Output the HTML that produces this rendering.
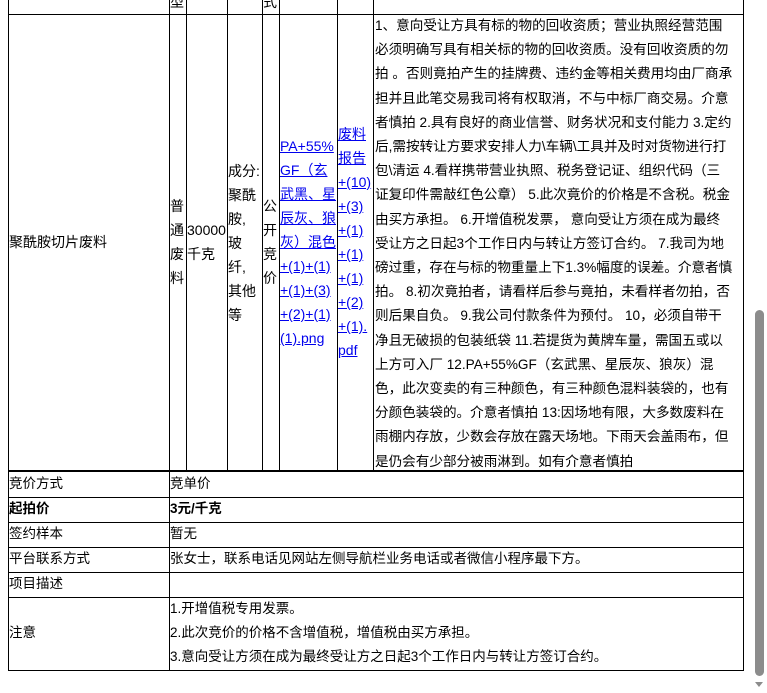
<!DOCTYPE html>
<html><head><meta charset="utf-8"><style>
body{margin:0;width:767px;height:693px;overflow:hidden;background:#fff;font-family:"Liberation Sans","Noto Sans CJK SC",sans-serif;font-size:13.5px;color:#000;position:relative}
.a{position:absolute}
.v{position:absolute;width:1px;background:#000}
.h{position:absolute;height:1px;background:#000}
.c{position:absolute;line-height:24px;white-space:nowrap}
.n{font-size:14px}
a{color:#00e;text-decoration:underline}
.t{position:absolute;left:375px;top:14px;line-height:24.2px;font-size:13.6px;white-space:nowrap}
</style></head><body>
<div class="h" style="left:8px;top:14px;width:736px"></div>
<div class="c n" style="left:170px;top:-10px">型</div>
<div class="c n" style="left:263px;top:-10px">式</div>
<div class="v" style="left:8px;top:0;height:671px"></div>
<div class="v" style="left:169px;top:0;height:471px"></div>
<div class="v" style="left:186px;top:0;height:471px"></div>
<div class="v" style="left:227px;top:0;height:471px"></div>
<div class="v" style="left:262px;top:0;height:471px"></div>
<div class="v" style="left:279px;top:0;height:471px"></div>
<div class="v" style="left:337px;top:0;height:471px"></div>
<div class="v" style="left:373px;top:0;height:471px"></div>
<div class="v" style="left:743px;top:0;height:671px"></div>
<div class="c n" style="left:9px;top:230px">聚酰胺切片废料</div>
<div class="c n" style="left:170px;top:194px">普<br>通<br>废<br>料</div>
<div class="c n" style="left:187px;top:218px">30000<br>千克</div>
<div class="c n" style="left:228px;top:159px">成分:<br>聚酰<br>胺,<br>玻<br>纤,<br>其他<br>等</div>
<div class="c n" style="left:263px;top:194px">公<br>开<br>竞<br>价</div>
<div class="c n" style="left:280px;top:134px"><a>PA+55%<br>GF（玄<br>武黑、星<br>辰灰、狼<br>灰）混色<br>+(1)+(1)<br>+(1)+(3)<br>+(2)+(1)<br>(1).png</a></div>
<div class="c n" style="left:338px;top:122px"><a>废料<br>报告<br>+(10)<br>+(3)<br>+(1)<br>+(1)<br>+(1)<br>+(2)<br>+(1).<br>pdf</a></div>
<div class="t">1、意向受让方具有标的物的回收资质；营业执照经营范围<br>必须明确写具有相关标的物的回收资质。没有回收资质的勿<br>拍 。否则竟拍产生的挂牌费、违约金等相关费用均由厂商承<br>担并且此笔交易我司将有权取消，不与中标厂商交易。介意<br>者慎拍 2.具有良好的商业信誉、财务状况和支付能力 3.定约<br>后,需按转让方要求安排人力\车辆\工具并及时对货物进行打<br>包\清运 4.看样携带营业执照、税务登记证、组织代码（三<br>证复印件需敲红色公章） 5.此次竟价的价格是不含税。税金<br>由买方承担。 6.开增值税发票， 意向受让方须在成为最终<br>受让方之日起3个工作日内与转让方签订合约。 7.我司为地<br>磅过重，存在与标的物重量上下1.3%幅度的误差。介意者慎<br>拍。 8.初次竟拍者，请看样后参与竟拍，未看样者勿拍，否<br>则后果自负。 9.我公司付款条件为预付。 10，必须自带干<br>净且无破损的包装纸袋 11.若提货为黄牌车量，需国五或以<br>上方可入厂 12.PA+55%GF（玄武黑、星辰灰、狼灰）混<br>色，此次变卖的有三种颜色，有三种颜色混料装袋的，也有<br>分颜色装袋的。介意者慎拍 13:因场地有限，大多数废料在<br>雨棚内存放，少数会存放在露天场地。下雨天会盖雨布，但<br>是仍会有少部分被雨淋到。如有介意者慎拍</div>
<div class="h" style="left:8px;top:470px;width:736px;height:2px"></div>
<div class="h" style="left:8px;top:497px;width:736px"></div>
<div class="h" style="left:8px;top:522px;width:736px"></div>
<div class="h" style="left:8px;top:547px;width:736px"></div>
<div class="h" style="left:8px;top:572px;width:736px"></div>
<div class="h" style="left:8px;top:597px;width:736px"></div>
<div class="h" style="left:8px;top:670px;width:736px"></div>
<div class="v" style="left:169px;top:472px;height:198px"></div>
<div class="c" style="left:9px;top:472px">竞价方式</div><div class="c" style="left:170px;top:472px">竞单价</div>
<div class="c" style="left:9px;top:497px;font-weight:bold">起拍价</div><div class="c" style="left:170px;top:497px;font-weight:bold">3元/千克</div>
<div class="c" style="left:9px;top:522px">签约样本</div><div class="c" style="left:170px;top:522px">暂无</div>
<div class="c" style="left:9px;top:547px">平台联系方式</div><div class="c" style="left:170px;top:547px">张女士，联系电话见网站左侧导航栏业务电话或者微信小程序最下方。</div>
<div class="c" style="left:9px;top:572px">项目描述</div>
<div class="c" style="left:9px;top:621px">注意</div>
<div class="c" style="left:170px;top:597px">1.开增值税专用发票。<br>2.此次竞价的价格不含增值税，增值税由买方承担。<br>3.意向受让方须在成为最终受让方之日起3个工作日内与转让方签订合约。</div>
<div class="a" style="left:755px;top:310px;width:9px;height:366px;background:#8c8c8c;border-radius:5px"></div>
<div class="a" style="left:755px;top:682px;width:0;height:0;border-left:4.5px solid transparent;border-right:4.5px solid transparent;border-top:5px solid #8c8c8c"></div>
</body></html>
